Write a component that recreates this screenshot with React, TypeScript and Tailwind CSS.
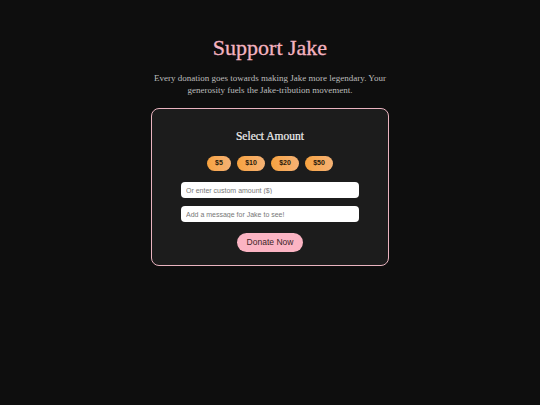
import React from "react";

export default function App() {
  const amounts = ["$5", "$10", "$20", "$50"];
  return (
    <div className="min-h-[405px] w-full bg-[#0e0e0e] flex flex-col items-center pt-[34px]">
      <h1 className="text-[22px] leading-[28px] text-[#f4b3c0] font-['Liberation_Serif',serif] [-webkit-text-stroke:0.3px_#f4b3c0]">
        Support Jake
      </h1>
      <p className="mt-[10px] w-[250px] text-center text-[9px] leading-[12px] text-[#bdbdbd] font-['Liberation_Serif',serif]">
        Every donation goes towards making Jake more legendary. Your generosity fuels the Jake-tribution movement.
      </p>
      <div className="mt-[12px] w-[238px] rounded-[8px] border border-[#e9b3bf] bg-[#1c1c1c] flex flex-col items-center pt-[19px] pb-[13px]">
        <h2 className="text-[11.5px] leading-[16px] text-[#f0f0f0] font-['Liberation_Serif',serif] [-webkit-text-stroke:0.2px_#f0f0f0]">
          Select Amount
        </h2>
        <div className="mt-[12px] flex gap-[6px]">
          {amounts.map((a) => (
            <button
              key={a}
              className="h-[15px] rounded-full bg-gradient-to-r from-[#f7a23e] to-[#f5b274] px-[8px] text-[7px] font-bold text-[#2a1a0a] font-['Liberation_Sans',sans-serif] min-w-[24px]"
              style={{ width: a === "$5" ? 24 : 28 }}
            >
              {a}
            </button>
          ))}
        </div>
        <input
          className="mt-[11px] h-[16px] w-[178px] rounded-[4px] bg-white px-[5px] text-[7px] text-[#333] placeholder:text-[#777] font-['Liberation_Sans',sans-serif] outline-none"
          placeholder="Or enter custom amount ($)"
        />
        <input
          className="mt-[8px] h-[16px] w-[178px] rounded-[4px] bg-white px-[5px] text-[7px] text-[#333] placeholder:text-[#777] font-['Liberation_Sans',sans-serif] outline-none"
          placeholder="Add a message for Jake to see!"
        />
        <button className="mt-[11px] h-[19px] w-[66px] rounded-full bg-[#fbb4c3] text-[8.5px] text-[#3a1f26] font-['Liberation_Sans',sans-serif]">
          Donate Now
        </button>
      </div>
    </div>
  );
}
